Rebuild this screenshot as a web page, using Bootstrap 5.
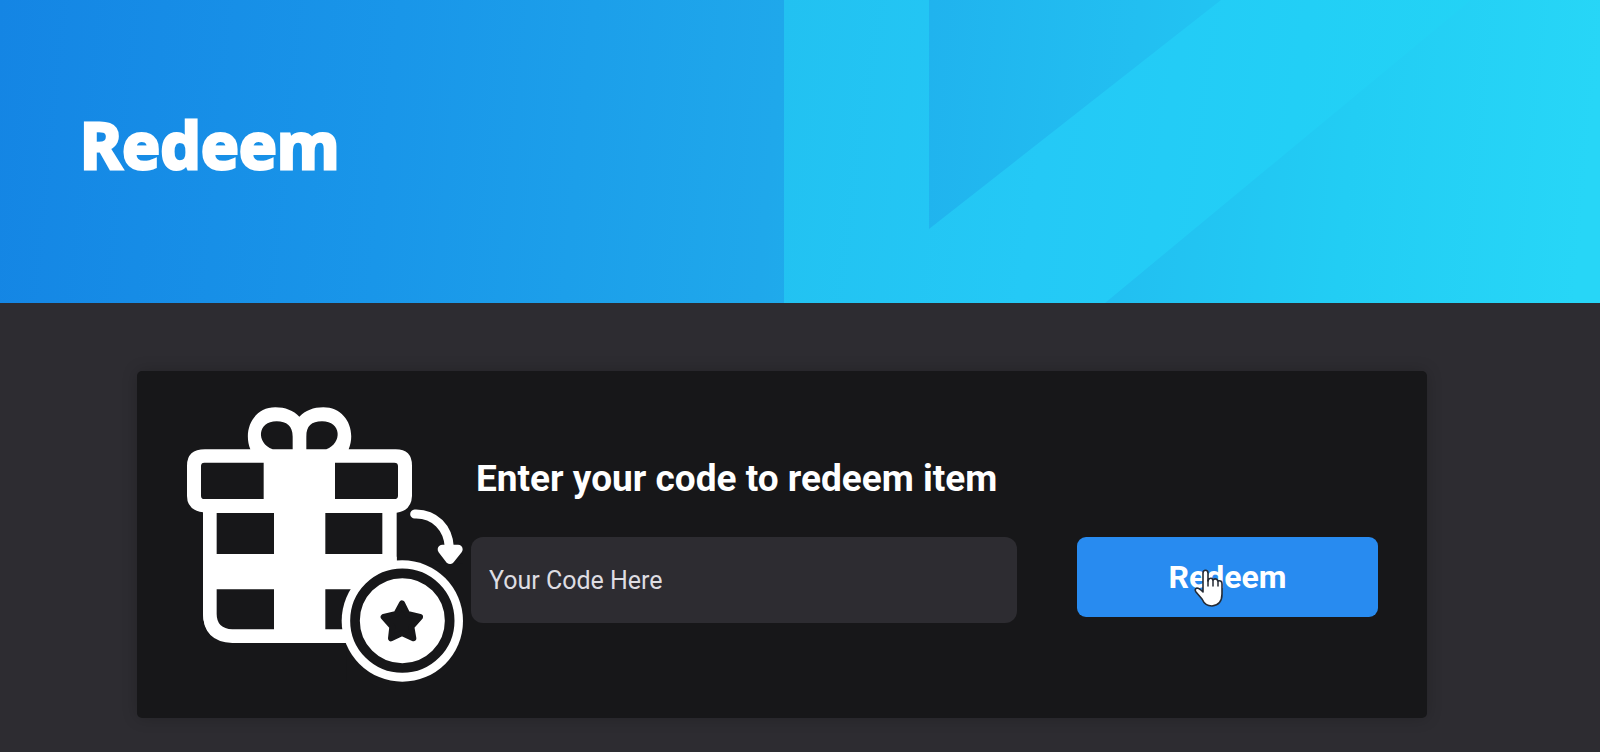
<!DOCTYPE html>
<html lang="en">
<head>
<meta charset="utf-8">
<meta name="viewport" content="width=device-width, initial-scale=1">
<title>Redeem</title>
<link href="https://cdn.jsdelivr.net/npm/bootstrap@5.3.0/dist/css/bootstrap.min.css" rel="stylesheet">
<style>
  body { background: #2d2c31; font-family: Roboto, "Liberation Sans", sans-serif; color: #fff; }
  .hero { min-height: 303px; padding: 0 80px 14px; background: #1ea9ec; }
  .hero-art { z-index: 0; }
  .hero-title { z-index: 1; font-family: "Noto Sans", "Open Sans", sans-serif; font-weight: 700; font-size: 64px; line-height: 80px; -webkit-text-stroke: 3px #fff; }
  .redeem-wrap { padding: 68px 173px 33px 137px; }
  .redeem-card { background: #171719; border-radius: 5px; padding: 36px 49px 36px 50px; gap: 8px; box-shadow: 0 0 16px rgba(0, 0, 0, .2); }
  .gift { width: 276px; height: 275px; }
  .redeem-form { padding-top: 50px; }
  .form-title { font-size: 37px; line-height: 44px; font-weight: 700; padding-left: 5px; margin-bottom: 36px; }
  .form-line { gap: 60px; }
  .code-input, .code-input:focus { height: 86px; padding: 0 18px; border: 0; border-radius: 12px; background: #2d2c31; color: #fff; font-size: 25px; }
  .code-input::placeholder { color: #dedde2; opacity: 1; }
  .redeem-btn, .redeem-btn:hover { width: 301px; height: 80px; border: 0; border-radius: 9px; background: #288bf0; color: #fff; font-size: 32px; font-weight: 700; }
  .pointer { left: 117px; top: 32px; width: 30px; height: 38px; }
</style>
</head>
<body>
<header class="hero position-relative d-flex align-items-center">
  <svg class="hero-art position-absolute top-0 start-0 w-100 h-100" viewBox="0 0 1600 303" preserveAspectRatio="none" aria-hidden="true">
    <defs>
      <linearGradient id="sky" gradientUnits="userSpaceOnUse" x1="0" y1="0" x2="1590" y2="160">
        <stop offset="0" stop-color="#1485e4"/><stop offset=".25" stop-color="#1996e9"/><stop offset=".49" stop-color="#1fa8eb"/>
        <stop offset=".58" stop-color="#20b3ee"/><stop offset=".71" stop-color="#22bff1"/><stop offset=".85" stop-color="#22cdf4"/><stop offset="1" stop-color="#27d6f7"/>
      </linearGradient>
      <linearGradient id="beam" gradientUnits="userSpaceOnUse" x1="784" y1="0" x2="1471" y2="100">
        <stop offset="0" stop-color="#22c1f1"/><stop offset=".4" stop-color="#24c9f6"/><stop offset=".75" stop-color="#22cff6"/><stop offset="1" stop-color="#23d3f5"/>
      </linearGradient>
    </defs>
    <path fill="url(#sky)" d="M0 0H1600V303H0z"/>
    <path fill="url(#beam)" d="M784 0H929V229L1221 0H1471L1105 303H784z"/>
  </svg>
  <h1 class="hero-title position-relative m-0">Redeem</h1>
</header>

<main class="redeem-wrap">
  <section class="redeem-card d-flex align-items-start">
    <svg class="gift flex-shrink-0" viewBox="51 51 828 825" aria-hidden="true">
      <path fill="#fff" d="M241 178C218 120 250 52 316 52C346 52 370 62 388 80C406 62 430 52 460 52C526 52 560 118 536 178H677Q726 178 726 227V318Q724 362 680 368V755H185Q99 752 99 668V367Q51 360 51 318V227Q51 178 105 178Z"/>
      <path fill="#fff" d="M99 560H620V759H187Q99 755 99 668Z"/>
      <g fill="#171719">
        <path d="M308 178C258 160 261 94 320 94C350 94 368 108 368 140V178ZM409 178V140C409 108 424 94 456 94C515 94 518 160 469 178Z"/>
        <path d="M281 218V327H103Q93 327 93 317V228Q93 218 103 218ZM495 218H673Q684 218 684 228V317Q684 327 673 327H495Z"/>
        <path d="M140 369H312V492H140ZM466 369H637V492H466ZM140 598H312V718H187Q140 716 140 672ZM466 598H560V718H466Z"/>
      </g>
      <path fill="#171719" d="M681 520V780H590V760H529V900H900V520Z"/>
      <path fill="#fff" d="M600 500H680V700H600Z"/>
      <circle cx="697" cy="693" r="182" fill="#fff"/>
      <circle cx="697" cy="692" r="142" fill="none" stroke="#171719" stroke-width="29"/>
      <path fill="#171719" stroke="#171719" stroke-width="18" stroke-linejoin="round" d="M696 640L712 672L750 681L724 710L730 745L696 729L663 745L667 710L641 681L679 672Z"/>
      <path fill="none" stroke="#fff" stroke-width="27" stroke-linecap="round" d="M734 372C795 370 835 415 838 472"/>
      <path fill="#fff" stroke="#fff" stroke-width="28" stroke-linejoin="round" d="M817 478H864L840 508Z"/>
    </svg>
    <form class="redeem-form flex-grow-1" onsubmit="return false">
      <label for="code" class="form-title d-block">Enter your code to redeem item</label>
      <div class="form-line d-flex align-items-start">
        <input id="code" type="text" class="form-control code-input flex-grow-1 w-auto" placeholder="Your Code Here">
        <div class="position-relative flex-shrink-0">
          <button type="submit" class="btn redeem-btn">Redeem</button>
          <svg class="pointer position-absolute pe-none" viewBox="0 0 30 38" aria-hidden="true">
            <path fill="#fff" stroke="#252b35" stroke-width="1.6" stroke-linejoin="round" d="M9 21V4Q9 1.200 11.500 1.200T14 4V12Q15 8.500 18 9.500L19 11Q21 9 23 10.500L24 12Q28 11 28 15V25Q28 36 18 37Q11 37 8 30L2 23Q0 20 3 19Q5 19 9 23Z"/>
            <path fill="none" stroke="#252b35" stroke-width="1.500" stroke-linecap="round" d="M14 11V17M19 11V17M24 12V17"/>
          </svg>
        </div>
      </div>
    </form>
  </section>
</main>
<script src="https://cdn.jsdelivr.net/npm/bootstrap@5.3.0/dist/js/bootstrap.bundle.min.js"></script>
</body>
</html>
